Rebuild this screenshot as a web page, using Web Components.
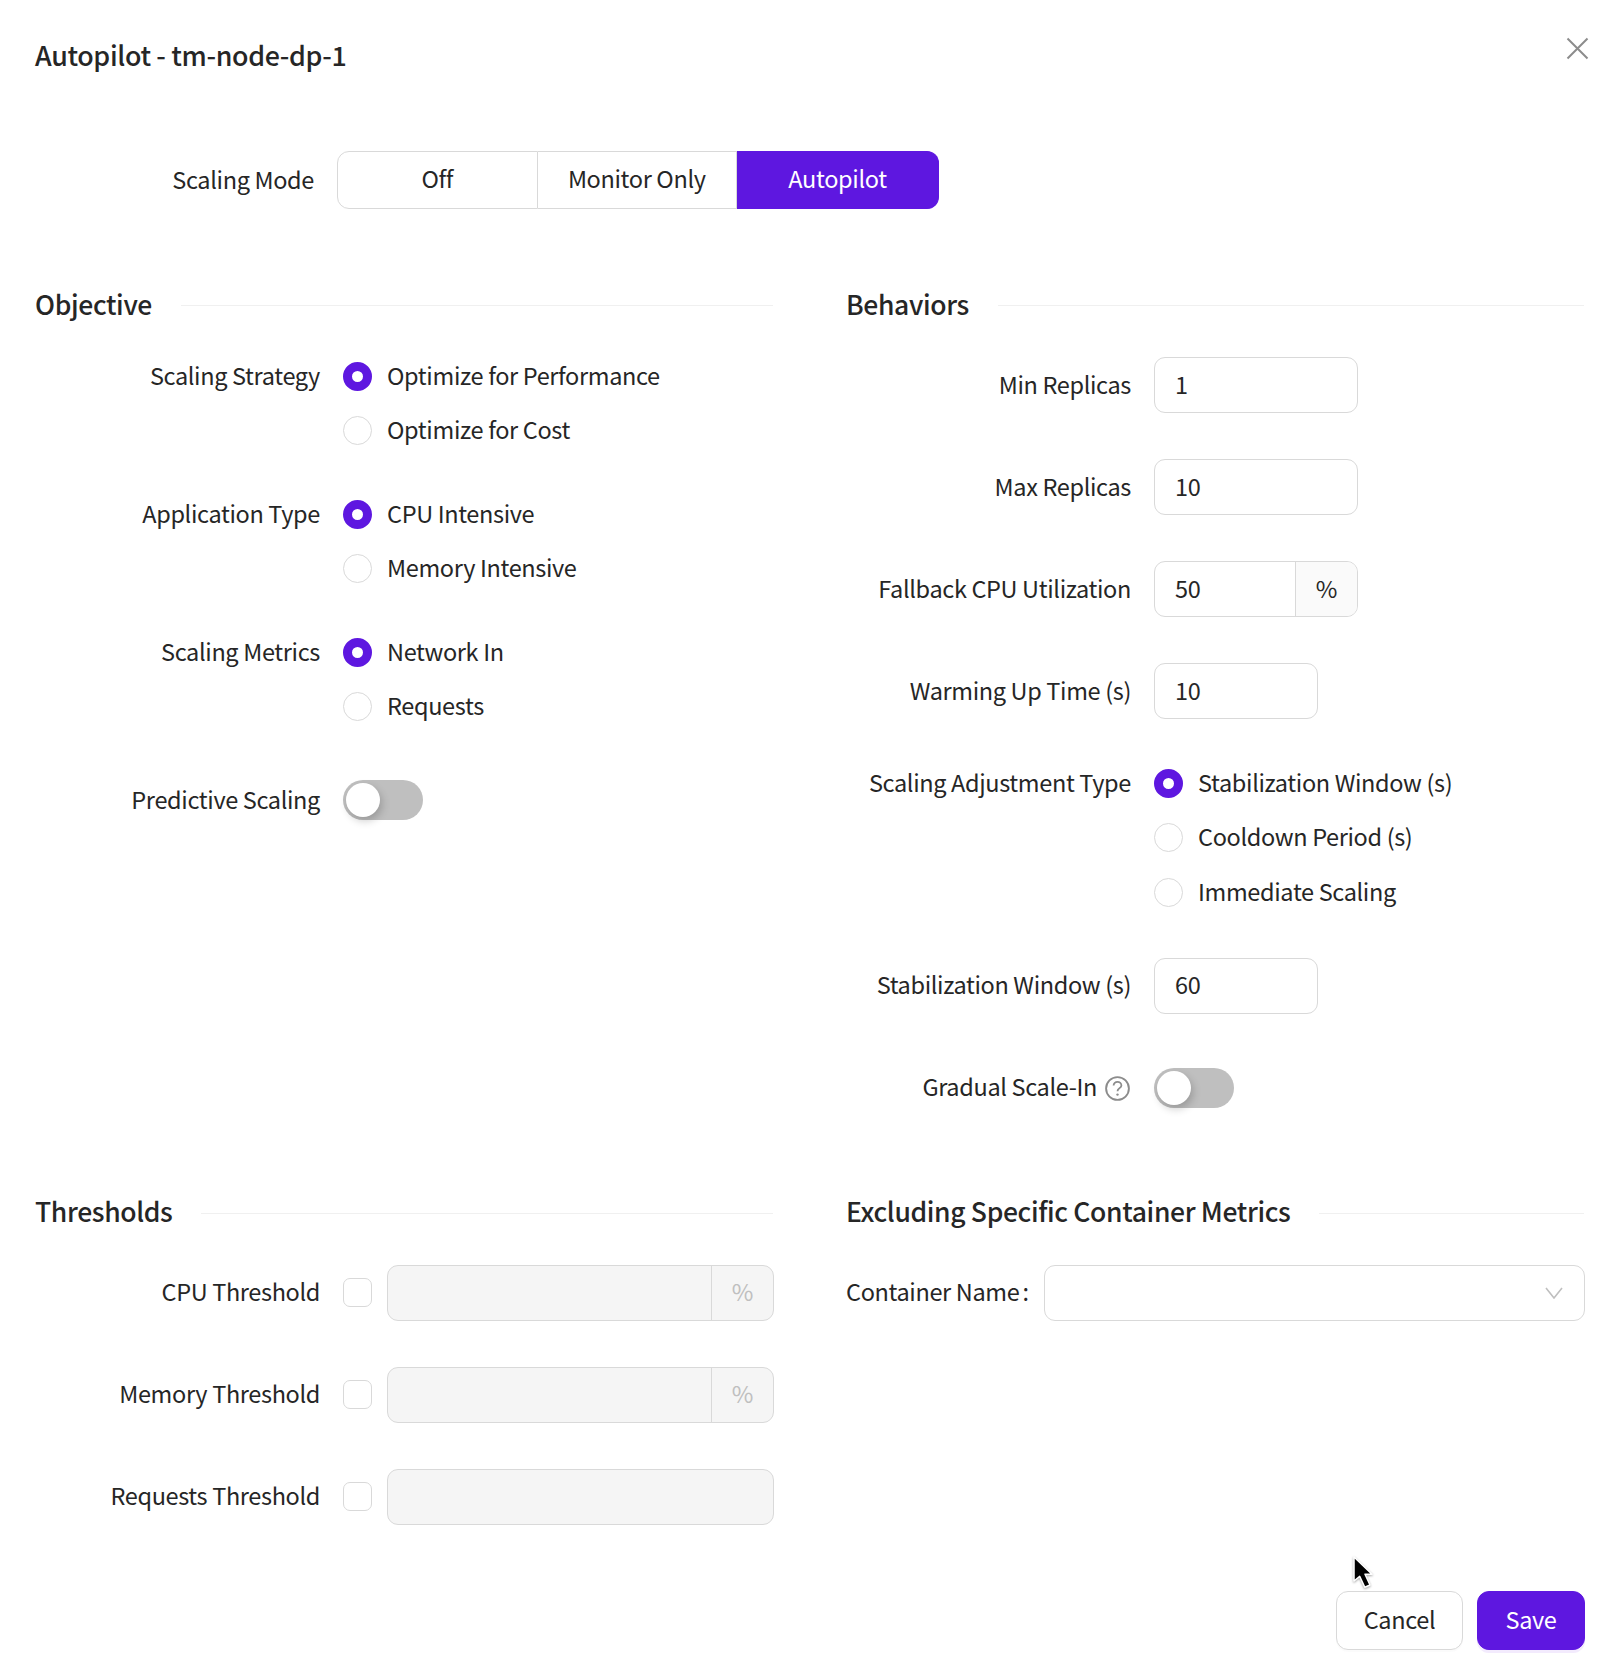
<!DOCTYPE html>
<html lang="en">
<head>
<meta charset="utf-8">
<title>Autopilot</title>
<style>
  html, body {
    margin: 0;
    background: #fff;
  }
  body {
    font: 400 23.5px/36px "Noto Sans CJK SC", "Lato", sans-serif;
    letter-spacing: -0.35px;
    color: #262626;
  }
</style>
</head>
<body>

<autopilot-dialog>
  <span slot="title">Autopilot - tm-node-dp-1</span>

  <form-field slot="mode" label="Scaling Mode" narrow>
    <seg-control options="Off,Monitor Only,Autopilot" active="2"></seg-control>
  </form-field>

  <form-section slot="objective" title="Objective" tight>
    <form-field label="Scaling Strategy" tall>
      <radio-group>
        <radio-item checked>Optimize for Performance</radio-item>
        <radio-item>Optimize for Cost</radio-item>
      </radio-group>
    </form-field>
    <form-field label="Application Type" tall>
      <radio-group>
        <radio-item checked>CPU Intensive</radio-item>
        <radio-item>Memory Intensive</radio-item>
      </radio-group>
    </form-field>
    <form-field label="Scaling Metrics" tall>
      <radio-group>
        <radio-item checked>Network In</radio-item>
        <radio-item>Requests</radio-item>
      </radio-group>
    </form-field>
    <form-field label="Predictive Scaling" class="toggle-row">
      <toggle-switch></toggle-switch>
    </form-field>
  </form-section>

  <form-section slot="behaviors" title="Behaviors" wide>
    <form-field label="Min Replicas"><text-box value="1" width="204"></text-box></form-field>
    <form-field label="Max Replicas"><text-box value="10" width="204"></text-box></form-field>
    <form-field label="Fallback CPU Utilization"><text-box value="50" unit="%" width="204"></text-box></form-field>
    <form-field label="Warming Up Time (s)"><text-box value="10" width="164"></text-box></form-field>
    <form-field label="Scaling Adjustment Type" tall class="pull">
      <radio-group>
        <radio-item checked>Stabilization Window (s)</radio-item>
        <radio-item>Cooldown Period (s)</radio-item>
        <radio-item>Immediate Scaling</radio-item>
      </radio-group>
    </form-field>
    <form-field label="Stabilization Window (s)"><text-box value="60" width="164"></text-box></form-field>
    <form-field label="Gradual Scale-In" hint class="toggle-row">
      <toggle-switch></toggle-switch>
    </form-field>
  </form-section>

  <form-section slot="thresholds" title="Thresholds" wide low>
    <form-field label="CPU Threshold"><threshold-input unit="%"></threshold-input></form-field>
    <form-field label="Memory Threshold"><threshold-input unit="%"></threshold-input></form-field>
    <form-field label="Requests Threshold"><threshold-input></threshold-input></form-field>
  </form-section>

  <form-section slot="excluding" title="Excluding Specific Container Metrics" wide low>
    <container-select label="Container Name"></container-select>
  </form-section>

  <action-button slot="footer" width="127">Cancel</action-button>
  <action-button slot="footer" width="108" primary>Save</action-button>
</autopilot-dialog>

<script>
class AutopilotDialog extends HTMLElement {
  constructor() {
    super();
    this.attachShadow({ mode: "open" });
    this.shadowRoot.innerHTML = `
      <style>
        :host {
          display: block;
          position: relative;
          width: 1622px;
          height: 1678px;
          box-sizing: border-box;
          padding: 35px 37px 0 35px;
          background: #fff;
          overflow: hidden;
        }
        header {
          height: 41px;
          padding-bottom: 2px;
          box-sizing: border-box;
          display: flex;
          align-items: center;
          font-weight: 500;
          font-size: 26.8px;
        }
        .close {
          position: absolute;
          left: 1566px;
          top: 37px;
          width: 23px;
          height: 23px;
        }
        .mode {
          margin-top: 75px;
        }
        .grid {
          margin-top: 76px;
          display: grid;
          grid-template-columns: 739px 739px;
          column-gap: 72px;
          row-gap: 76px;
        }
        footer {
          margin-top: 66px;
          display: flex;
          justify-content: flex-end;
          gap: 14px;
        }
        .cursor {
          position: absolute;
          left: 1350px;
          top: 1553px;
          width: 28px;
          height: 40px;
        }
      </style>
      <header><slot name="title"></slot></header>
      <svg class="close" viewBox="0 0 23 23" fill="none" stroke="#8c8c8c" stroke-width="2">
        <path d="M1.5 1.5 21.5 21.5M21.5 1.5 1.5 21.5"/>
      </svg>
      <div class="mode"><slot name="mode"></slot></div>
      <div class="grid">
        <slot name="objective"></slot>
        <slot name="behaviors"></slot>
        <slot name="thresholds"></slot>
        <slot name="excluding"></slot>
      </div>
      <footer><slot name="footer"></slot></footer>
      <svg class="cursor" viewBox="0 0 28 40">
        <path d="M4 4V28L9.7 23.4 14.8 34.3 20 32 15 21.2H22Z" fill="#000" stroke="#fff" stroke-width="1.5" stroke-linejoin="round" style="filter:drop-shadow(0 1px 1px rgba(0,0,0,.35))"/>
      </svg>
    `;
  }
}

class FormSection extends HTMLElement {
  constructor() {
    super();
    this.attachShadow({ mode: "open" });
    const title = this.getAttribute("title");
    this.removeAttribute("title");
    this.shadowRoot.innerHTML = `
      <style>
        :host {
          display: block;
        }
        .head {
          height: 40px;
          display: flex;
          align-items: center;
          gap: 29px;
          font-size: 26.5px;
          font-weight: 500;
        }
        .head span {
          margin-top: -2px;
        }
        .head i {
          flex: 1;
          height: 1px;
          background: #f0f0f0;
          margin: 1px 1px 0 0;
        }
        :host([low]) .head i {
          margin-top: 3px;
        }
        .body {
          display: flex;
          flex-direction: column;
          padding-top: 24px;
          gap: 29px;
        }
        :host([wide]) .body {
          padding-top: 32px;
          gap: 46px;
        }
        :host([low]) .body {
          padding-top: 33px;
        }
        ::slotted(.pull) {
          margin: -9px 0 -8px;
        }
        ::slotted(.toggle-row) {
          height: 74px;
          align-items: center;
        }
        :host([wide]) ::slotted(.toggle-row) {
          height: 56px;
        }
      </style>
      <div class="head"><span>${title}</span><i></i></div>
      <div class="body"><slot></slot></div>
    `;
  }
}

class FormField extends HTMLElement {
  constructor() {
    super();
    this.attachShadow({ mode: "open" });
    const hint = this.hasAttribute("hint")
      ? `<svg class="hint" viewBox="0 0 25 25" fill="none">
           <circle cx="12.5" cy="12.5" r="11.4" stroke="#8c8c8c" stroke-width="1.9"/>
           <path d="M8.6 9.6C8.6 7.4 10.3 5.9 12.5 5.9S16.4 7.4 16.4 9.4C16.4 12 12.5 12.3 12.5 15.2" stroke="#8c8c8c" stroke-width="1.8"/>
           <circle cx="12.5" cy="18.6" r="1.2" fill="#8c8c8c"/>
         </svg>`
      : "";
    this.shadowRoot.innerHTML = `
      <style>
        :host {
          display: flex;
          align-items: center;
          gap: 23px;
        }
        :host([tall]) {
          align-items: flex-start;
        }
        :host([tall]) label {
          height: 54.5px;
        }
        :host([narrow]) label {
          width: 279px;
        }
        label {
          width: 285px;
          flex: none;
          box-sizing: border-box;
          padding-bottom: 3px;
          display: flex;
          align-items: center;
          justify-content: flex-end;
          gap: 8px;
          white-space: nowrap;
        }
        .hint {
          width: 25px;
          height: 25px;
          flex: none;
          margin: 5px 1px 0 0;
        }
      </style>
      <label>${this.getAttribute("label")}${hint}</label>
      <slot></slot>
    `;
  }
}

class SegControl extends HTMLElement {
  constructor() {
    super();
    this.attachShadow({ mode: "open" });
    const active = Number(this.getAttribute("active"));
    const cells = this.getAttribute("options").split(",")
      .map((o, i) => `<div class="${i === active ? "on" : ""}">${o}</div>`).join("");
    this.shadowRoot.innerHTML = `
      <style>
        :host {
          display: flex;
          width: 602px;
          height: 58px;
        }
        div {
          flex: 1 1 0;
          box-sizing: border-box;
          border: 1px solid #d9d9d9;
          border-left-width: 0;
          display: flex;
          align-items: center;
          justify-content: center;
          padding-bottom: 5px;
        }
        div:first-of-type {
          border-left-width: 1px;
          border-radius: 12px 0 0 12px;
        }
        div:last-of-type {
          flex: none;
          width: 202px;
          border-radius: 0 12px 12px 0;
        }
        .on {
          background: #5e17e0;
          border-color: #5e17e0;
          color: #fff;
        }
      </style>
      ${cells}
    `;
  }
}

class RadioGroup extends HTMLElement {
  constructor() {
    super();
    this.attachShadow({ mode: "open" });
    this.shadowRoot.innerHTML = `
      <style>
        :host {
          display: flex;
          flex-direction: column;
        }
      </style>
      <slot></slot>
    `;
  }
}

class RadioItem extends HTMLElement {
  constructor() {
    super();
    this.attachShadow({ mode: "open" });
    this.shadowRoot.innerHTML = `
      <style>
        :host {
          display: flex;
          align-items: center;
          gap: 15px;
          height: 54.5px;
          white-space: nowrap;
        }
        i {
          width: 29px;
          height: 29px;
          box-sizing: border-box;
          border: 1px solid #d9d9d9;
          border-radius: 50%;
          background: #fff;
          flex: none;
        }
        :host([checked]) i {
          border: 9px solid #5e17e0;
        }
        span {
          padding-bottom: 3px;
        }
      </style>
      <i></i><span><slot></slot></span>
    `;
  }
}

class ToggleSwitch extends HTMLElement {
  constructor() {
    super();
    this.attachShadow({ mode: "open" });
    this.shadowRoot.innerHTML = `
      <style>
        :host {
          display: block;
          position: relative;
          width: 80px;
          height: 40px;
          border-radius: 20px;
          background: #bfbfbf;
        }
        i {
          position: absolute;
          left: 3px;
          top: 3px;
          width: 34px;
          height: 34px;
          border-radius: 50%;
          background: #fff;
          box-shadow: 2px 4px 8px rgba(0, 0, 0, .2);
        }
      </style>
      <i></i>
    `;
  }
}

class TextBox extends HTMLElement {
  constructor() {
    super();
    this.attachShadow({ mode: "open" });
    const unit = this.getAttribute("unit");
    this.shadowRoot.innerHTML = `
      <style>
        :host {
          display: flex;
          box-sizing: border-box;
          width: ${this.getAttribute("width")}px;
          height: 56px;
          border: 1px solid #d9d9d9;
          border-radius: 11px;
          overflow: hidden;
        }
        .val {
          flex: 1;
          padding: 0 20px 3px;
          display: flex;
          align-items: center;
        }
        .unit {
          width: 61px;
          flex: none;
          border-left: 1px solid #d9d9d9;
          background: #fafafa;
          padding-bottom: 3px;
          box-sizing: content-box;
          display: flex;
          align-items: center;
          justify-content: center;
        }
      </style>
      <div class="val">${this.getAttribute("value")}</div>
      ${unit ? `<div class="unit">${unit}</div>` : ""}
    `;
  }
}

class ThresholdInput extends HTMLElement {
  constructor() {
    super();
    this.attachShadow({ mode: "open" });
    const unit = this.getAttribute("unit");
    this.shadowRoot.innerHTML = `
      <style>
        :host {
          display: flex;
          align-items: center;
          gap: 15px;
          flex: 1;
        }
        .check {
          width: 29px;
          height: 29px;
          box-sizing: border-box;
          border: 1px solid #d9d9d9;
          border-radius: 7px;
          flex: none;
        }
        .box {
          flex: 1;
          display: flex;
          height: 56px;
          box-sizing: border-box;
          border: 1px solid #d9d9d9;
          border-radius: 11px;
          background: #f5f5f5;
          color: #bfbfbf;
        }
        .box span {
          flex: 1;
        }
        .unit {
          width: 61px;
          flex: none;
          border-left: 1px solid #d9d9d9;
          padding-bottom: 3px;
          display: flex;
          align-items: center;
          justify-content: center;
        }
      </style>
      <div class="check"></div>
      <div class="box"><span></span>${unit ? `<div class="unit">${unit}</div>` : ""}</div>
    `;
  }
}

class ContainerSelect extends HTMLElement {
  constructor() {
    super();
    this.attachShadow({ mode: "open" });
    this.shadowRoot.innerHTML = `
      <style>
        :host {
          display: flex;
          align-items: center;
          gap: 15px;
        }
        label {
          white-space: nowrap;
          padding-bottom: 3px;
        }
        label b {
          font-weight: 400;
          margin-left: 3px;
        }
        .box {
          flex: 1;
          height: 56px;
          box-sizing: border-box;
          border: 1px solid #d9d9d9;
          border-radius: 11px;
          display: flex;
          align-items: center;
          justify-content: flex-end;
          padding-right: 21px;
        }
        svg {
          width: 18px;
          height: 12px;
        }
      </style>
      <label>${this.getAttribute("label")}<b>:</b></label>
      <div class="box">
        <svg viewBox="0 0 18 12" fill="none" stroke="#bfbfbf" stroke-width="1.6"><path d="M1 1 9 11 17 1"/></svg>
      </div>
    `;
  }
}

class ActionButton extends HTMLElement {
  constructor() {
    super();
    this.attachShadow({ mode: "open" });
    this.shadowRoot.innerHTML = `
      <style>
        :host {
          display: flex;
          align-items: center;
          justify-content: center;
          box-sizing: border-box;
          width: ${this.getAttribute("width")}px;
          height: 59px;
          padding-bottom: 3px;
          border: 1px solid #d9d9d9;
          border-radius: 12px;
          background: #fff;
          box-shadow: 0 2px 0 rgba(0, 0, 0, .015);
        }
        :host([primary]) {
          background: #5e17e0;
          border-color: #5e17e0;
          color: #fff;
          box-shadow: 0 3px 0 #f3ebfd;
        }
      </style>
      <slot></slot>
    `;
  }
}

customElements.define("autopilot-dialog", AutopilotDialog);
customElements.define("form-section", FormSection);
customElements.define("form-field", FormField);
customElements.define("seg-control", SegControl);
customElements.define("radio-group", RadioGroup);
customElements.define("radio-item", RadioItem);
customElements.define("toggle-switch", ToggleSwitch);
customElements.define("text-box", TextBox);
customElements.define("threshold-input", ThresholdInput);
customElements.define("container-select", ContainerSelect);
customElements.define("action-button", ActionButton);
</script>
</body>
</html>
